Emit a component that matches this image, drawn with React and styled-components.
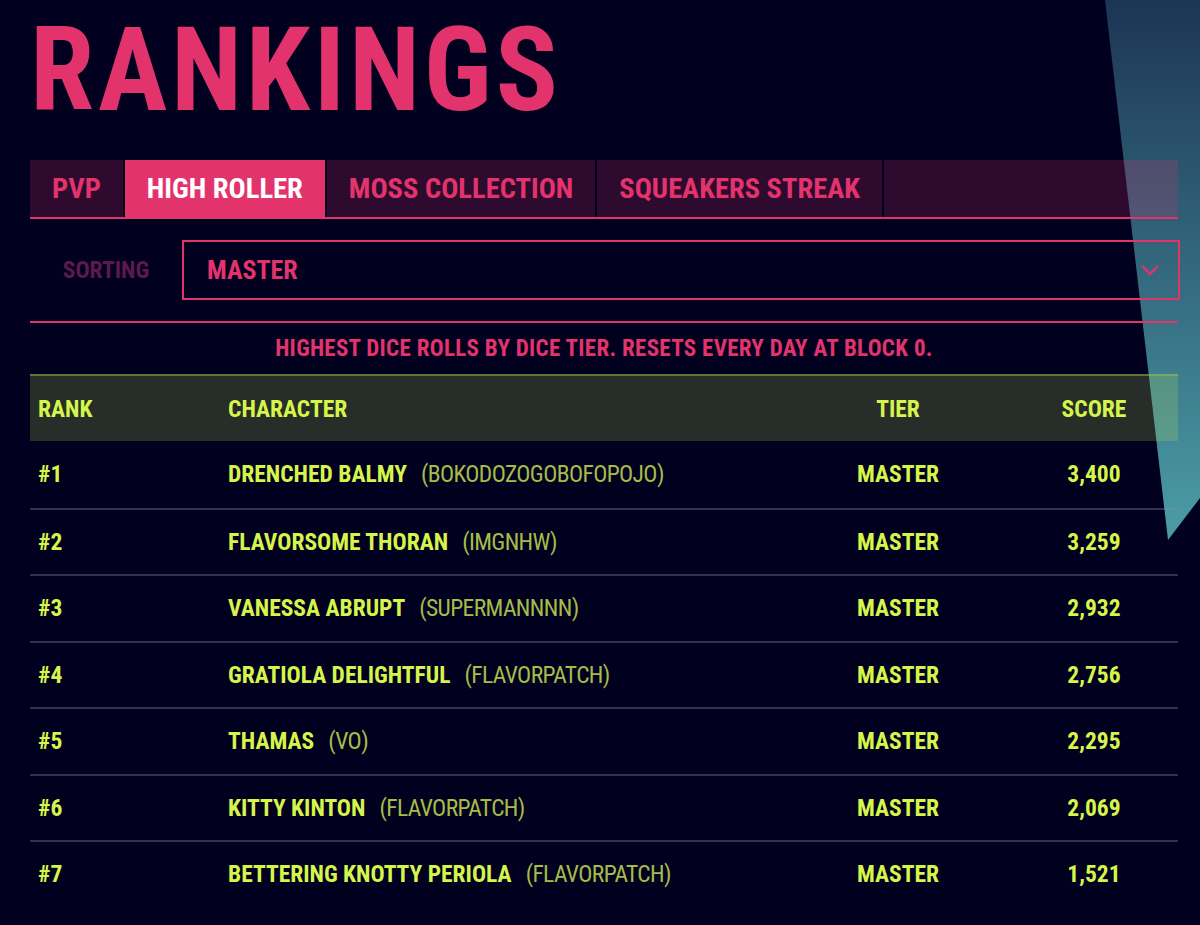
import styled, { createGlobalStyle } from "styled-components";

const PINK = "#e3336d";
const LIME = "#d6f54a";

const Global = createGlobalStyle`
  html, body {
    margin: 0;
    padding: 0;
    background: #02001f;
  }
  body {
    font-family: "Roboto Condensed", "DejaVu Sans Condensed", "Liberation Sans", sans-serif;
  }
`;

const Page = styled.div`
  position: relative;
  min-height: 925px;
  overflow: hidden;
  padding: 12px 22px 0 30px;
  box-sizing: border-box;
`;

const Beam = styled.svg`
  position: absolute;
  top: 0;
  right: 0;
  width: 95px;
  height: 540px;
  z-index: 0;
`;

const Content = styled.div`
  position: relative;
  z-index: 1;
`;

const Title = styled.h1`
  margin: 0 0 32px;
  font-size: 116px;
  line-height: 116px;
  font-weight: 700;
  color: ${PINK};
  letter-spacing: 3.8px;
`;

const Tabs = styled.div`
  display: flex;
  gap: 2px;
  height: 57px;
  border-bottom: 2px solid ${PINK};
`;

const Tab = styled.div`
  display: flex;
  align-items: center;
  padding: 0 22px;
  font-size: 28.5px;
  font-weight: 700;
  color: ${(p) => (p.$active ? "#ffffff" : PINK)};
  background: ${(p) => (p.$active ? PINK : "rgba(227, 51, 109, 0.2)")};
  flex: ${(p) => (p.$fill ? 1 : "none")};
`;

const SortRow = styled.div`
  display: flex;
  align-items: center;
  padding: 21px 0;
  border-bottom: 2px solid ${PINK};
`;

const SortLabel = styled.div`
  width: 152px;
  text-align: center;
  font-size: 23.5px;
  font-weight: 700;
  color: #5b1a4b;
`;

const Select = styled.div`
  flex: 1;
  margin-right: -2px;
  height: 60px;
  box-sizing: border-box;
  border: 2px solid ${PINK};
  display: flex;
  align-items: center;
  justify-content: space-between;
  padding: 0 18px 0 23px;
  font-size: 26px;
  font-weight: 700;
  color: ${PINK};
`;

const Note = styled.div`
  height: 51px;
  display: flex;
  align-items: center;
  justify-content: center;
  font-size: 23px;
  font-weight: 700;
  color: ${PINK};
  letter-spacing: 0.3px;
`;

const Grid = styled.div`
  display: grid;
  grid-template-columns: 198px 1fr 224px 168px;
  align-items: center;
`;

const Head = styled(Grid)`
  height: 67px;
  box-sizing: border-box;
  border-top: 2px solid rgba(150, 190, 80, 0.5);
  background: rgba(200, 240, 80, 0.19);
  color: ${LIME};
  font-size: 23.5px;
  font-weight: 700;
`;

const Row = styled(Grid)`
  height: 66.5px;
  box-sizing: border-box;
  border-top: ${(p) => (p.$first ? "none" : "2px solid rgba(140, 140, 165, 0.35)")};
  color: ${LIME};
  font-size: 23.5px;
  font-weight: 700;
`;

const Cell = styled.div`
  padding-left: ${(p) => (p.$pad ? "8px" : "0")};
  text-align: ${(p) => (p.$center ? "center" : "left")};
  white-space: nowrap;
`;

const Handle = styled.span`
  margin-left: 14px;
  font-weight: 400;
  letter-spacing: -0.6px;
  color: #a5bd48;
`;

const rows = [
  ["DRENCHED BALMY", "BOKODOZOGOBOFOPOJO", "3,400"],
  ["FLAVORSOME THORAN", "IMGNHW", "3,259"],
  ["VANESSA ABRUPT", "SUPERMANNNN", "2,932"],
  ["GRATIOLA DELIGHTFUL", "FLAVORPATCH", "2,756"],
  ["THAMAS", "VO", "2,295"],
  ["KITTY KINTON", "FLAVORPATCH", "2,069"],
  ["BETTERING KNOTTY PERIOLA", "FLAVORPATCH", "1,521"],
];

export default function App() {
  return (
    <Page>
      <Global />
      <Beam viewBox="0 0 95 540" preserveAspectRatio="none">
        <defs>
          <linearGradient id="beam" x1="0" y1="0" x2="0" y2="1">
            <stop offset="0" stopColor="#1c3554" />
            <stop offset="1" stopColor="#4b9da6" />
          </linearGradient>
        </defs>
        <polygon points="0,0 95,0 95,498 63,540" fill="url(#beam)" />
      </Beam>
      <Content>
        <Title>RANKINGS</Title>
        <Tabs>
          <Tab>PVP</Tab>
          <Tab $active>HIGH ROLLER</Tab>
          <Tab>MOSS COLLECTION</Tab>
          <Tab>SQUEAKERS STREAK</Tab>
          <Tab $fill />
        </Tabs>
        <SortRow>
          <SortLabel>SORTING</SortLabel>
          <Select>
            MASTER
            <svg width="20" height="12" viewBox="0 0 20 12">
              <polyline points="2,2 10,10 18,2" fill="none" stroke={PINK} strokeWidth="2.4" />
            </svg>
          </Select>
        </SortRow>
        <Note>HIGHEST DICE ROLLS BY DICE TIER. RESETS EVERY DAY AT BLOCK 0.</Note>
        <Head>
          <Cell $pad>RANK</Cell>
          <Cell>CHARACTER</Cell>
          <Cell $center>TIER</Cell>
          <Cell $center>SCORE</Cell>
        </Head>
        {rows.map(([name, handle, score], i) => (
          <Row key={name} $first={i === 0}>
            <Cell $pad>#{i + 1}</Cell>
            <Cell>
              {name}
              <Handle>({handle})</Handle>
            </Cell>
            <Cell $center>MASTER</Cell>
            <Cell $center>{score}</Cell>
          </Row>
        ))}
      </Content>
    </Page>
  );
}
